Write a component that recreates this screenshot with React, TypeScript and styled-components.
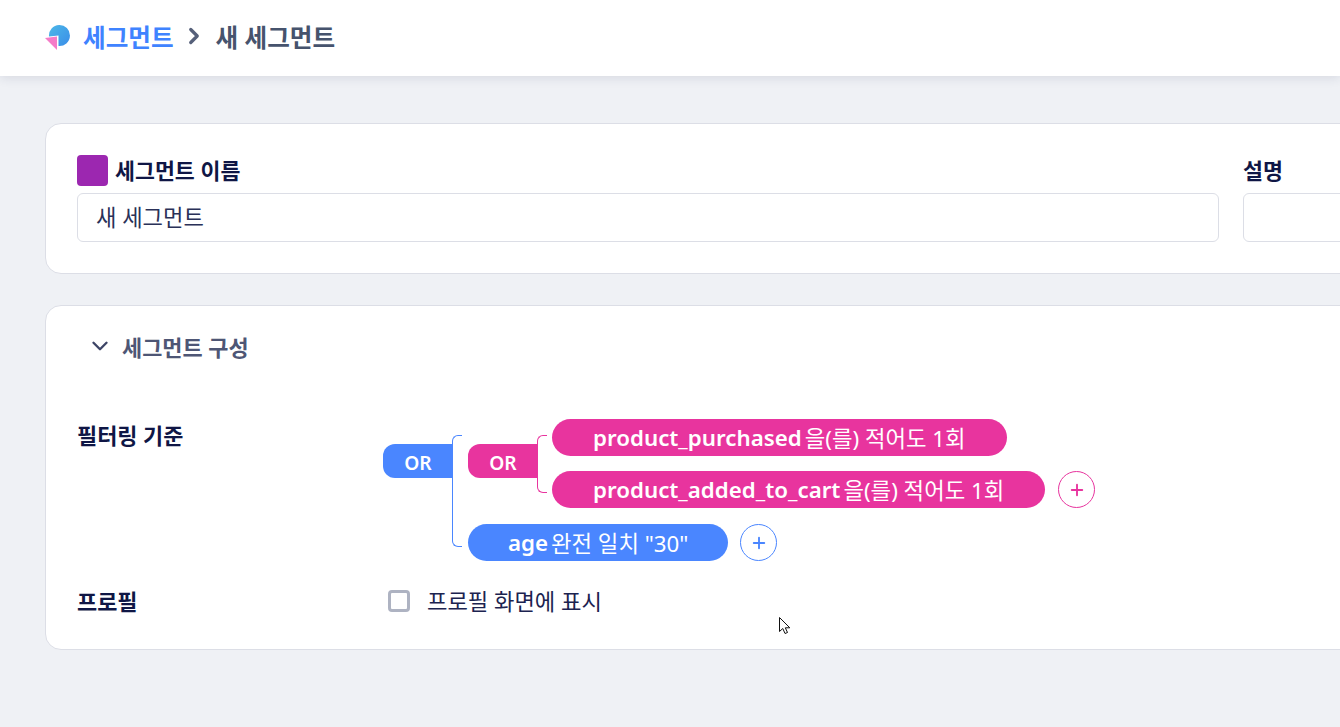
import React from "react"
import styled, { createGlobalStyle } from "styled-components"
import { ChevronDown, ChevronRight, Plus } from "lucide-react"

const BLUE = "#4a86ff"
const PINK = "#e8349e"

const GlobalStyle = createGlobalStyle`
  html, body {
    margin: 0;
    height: 100%;
    overflow: hidden;
    background: #eff1f5;
    font-family: "Noto Sans", "Noto Sans CJK KR", sans-serif;
    color: #0f1645;
  }
`

const Page = styled.div`
  position: relative;
  width: 1340px;
  height: 727px;
  overflow: hidden;
`

const Header = styled.header`
  height: 76px;
  box-sizing: border-box;
  padding: 0 0 5px 45px;
  background: #fff;
  box-shadow: 0 2px 10px rgba(40, 50, 90, 0.12);
  display: flex;
  align-items: center;
  font-size: 24.6px;
  font-weight: 700;
`

const Crumb = styled.span<{ $current?: boolean }>`
  color: ${({ $current }) => ($current ? "#46536d" : "#3f83ff")};
`

const CrumbArrow = styled.span`
  display: flex;
  margin: 0 9px 0 7px;
  color: #56607a;
`

const Content = styled.main`
  width: 1700px;
  padding: 47px 0 0 45px;
  display: flex;
  flex-direction: column;
  gap: 31px;
`

const Card = styled.section`
  background: #fff;
  border: 1px solid #dcdee6;
  border-radius: 16px;
  padding: 30px 31px;
  box-sizing: border-box;
`

const NameCard = styled(Card)`
  display: flex;
  gap: 24px;
  height: 151px;
`

const Field = styled.div<{ $width: number }>`
  width: ${({ $width }) => $width}px;
  display: flex;
  flex-direction: column;
  gap: 7px;
`

const FieldLabel = styled.label`
  display: flex;
  align-items: center;
  gap: 7px;
  height: 32px;
  font-size: 21.7px;
  font-weight: 700;
`

const FieldTitle = styled.span`
  margin-top: -2px;
`

const Swatch = styled.span`
  width: 31px;
  height: 31px;
  border-radius: 4px;
  background: #9c27b0;
`

const TextInput = styled.div`
  box-sizing: border-box;
  height: 49px;
  border: 1px solid #dcdee6;
  border-radius: 6px;
  padding: 0 18px 2px;
  display: flex;
  align-items: center;
  font-size: 22.2px;
  color: #2a3158;
`

const BuilderCard = styled(Card)`
  height: 345px;
  padding: 22px 31px 0;
`

const SectionToggle = styled.div`
  display: flex;
  align-items: center;
  gap: 9px;
  height: 38px;
  box-sizing: border-box;
  padding: 0 0 2px 10px;
  font-size: 21.9px;
  font-weight: 700;
  color: #4e5675;
`

const Row = styled.div`
  display: flex;
  align-items: flex-start;
`

const FilterRow = styled(Row)`
  margin-top: 53px;
`

const ProfileRow = styled(Row)`
  margin-top: 23px;
  align-items: center;
`

const RowLabel = styled.div`
  width: 306px;
  font-size: 21.9px;
  font-weight: 700;
`

const Group = styled.div`
  display: flex;
  align-items: flex-start;
`

const Connector = styled.div<{ $color: string }>`
  width: 70px;
  height: 34px;
  box-sizing: border-box;
  padding-top: 2px;
  margin-top: 25px;
  border-radius: 12px 0 0 12px;
  background: ${({ $color }) => $color};
  color: #fff;
  font-size: 19.2px;
  font-weight: 600;
  display: flex;
  align-items: center;
  justify-content: center;
`

const Bracket = styled.div<{ $color: string; $height: number; $gap: number }>`
  box-sizing: border-box;
  width: 10px;
  height: ${({ $height }) => $height}px;
  margin: 16px ${({ $gap }) => $gap}px 0 -1px;
  border: 1px solid ${({ $color }) => $color};
  border-right: none;
  border-radius: 6px 0 0 6px;
`

const Children = styled.div<{ $gap: number }>`
  display: flex;
  flex-direction: column;
  align-items: flex-start;
  gap: ${({ $gap }) => $gap}px;
`

const ConditionRow = styled.div<{ $gap: number }>`
  display: flex;
  align-items: center;
  gap: ${({ $gap }) => $gap}px;
`

const Condition = styled.div<{ $color: string; $padding: number }>`
  height: 37px;
  padding: 0 ${({ $padding }) => $padding}px;
  border-radius: 19px;
  background: ${({ $color }) => $color};
  color: #fff;
  font-size: 22.3px;
  display: flex;
  align-items: center;
  gap: 3px;
  white-space: nowrap;
`

const EventName = styled.b`
  font-weight: 600;
`

const AddButton = styled.button<{ $color: string }>`
  width: 37px;
  height: 37px;
  padding: 0;
  border: 1px solid ${({ $color }) => $color};
  border-radius: 50%;
  background: #fff;
  color: ${({ $color }) => $color};
  display: flex;
  align-items: center;
  justify-content: center;
`

const CheckLabel = styled.label`
  display: flex;
  align-items: center;
  gap: 17px;
  margin-left: 5px;
  font-size: 22.2px;
  color: #1c2350;
`

const CheckBox = styled.span`
  box-sizing: border-box;
  width: 22px;
  height: 22px;
  border: 3px solid #aeb3c2;
  border-radius: 4px;
  background: #fff;
`

const Cursor = styled.svg`
  position: absolute;
  left: 779px;
  top: 617px;
`

const LogoMark = styled.svg`
  margin: 5px 12px 0 0;
`

const Logo = () => (
  <LogoMark width="26" height="26" viewBox="0 0 26 26">
    <defs>
      <linearGradient id="logoGrad" x1="0" y1="0" x2="1" y2="1">
        <stop offset="0" stopColor="#4cb8e8" />
        <stop offset="1" stopColor="#3a8de8" />
      </linearGradient>
    </defs>
    <path d="M4 11.5 A10.5 10.5 0 1 1 13.5 21 L13.5 10.5 Z" fill="url(#logoGrad)" />
    <path d="M0 13 L12 11.5 L12 25 Z" fill="#f57cc8" />
  </LogoMark>
)

export default function App() {
  return (
    <Page>
      <GlobalStyle />
      <Header>
        <Logo />
        <Crumb>세그먼트</Crumb>
        <CrumbArrow>
          <ChevronRight size={26} strokeWidth={3} />
        </CrumbArrow>
        <Crumb $current>새 세그먼트</Crumb>
      </Header>
      <Content>
        <NameCard>
          <Field $width={1142}>
            <FieldLabel>
              <Swatch />
              <FieldTitle>세그먼트 이름</FieldTitle>
            </FieldLabel>
            <TextInput>새 세그먼트</TextInput>
          </Field>
          <Field $width={400}>
            <FieldLabel>
              <FieldTitle>설명</FieldTitle>
            </FieldLabel>
            <TextInput />
          </Field>
        </NameCard>
        <BuilderCard>
          <SectionToggle>
            <ChevronDown size={26} strokeWidth={2.2} color="#3d4566" />
            세그먼트 구성
          </SectionToggle>
          <FilterRow>
            <RowLabel>필터링 기준</RowLabel>
            <Group>
              <Connector $color={BLUE}>OR</Connector>
              <Bracket $color={BLUE} $height={112} $gap={6} />
              <Children $gap={16}>
                <Group>
                  <Connector $color={PINK}>OR</Connector>
                  <Bracket $color={PINK} $height={58} $gap={5} />
                  <Children $gap={15}>
                    <Condition $color={PINK} $padding={41}>
                      <EventName>product_purchased</EventName>을(를) 적어도 1회
                    </Condition>
                    <ConditionRow $gap={13}>
                      <Condition $color={PINK} $padding={41}>
                        <EventName>product_added_to_cart</EventName>을(를) 적어도 1회
                      </Condition>
                      <AddButton $color={PINK}>
                        <Plus size={18} strokeWidth={2.5} />
                      </AddButton>
                    </ConditionRow>
                  </Children>
                </Group>
                <ConditionRow $gap={12}>
                  <Condition $color={BLUE} $padding={40}>
                    <EventName>age</EventName>완전 일치 "30"
                  </Condition>
                  <AddButton $color={BLUE}>
                    <Plus size={18} strokeWidth={2.5} />
                  </AddButton>
                </ConditionRow>
              </Children>
            </Group>
          </FilterRow>
          <ProfileRow>
            <RowLabel>프로필</RowLabel>
            <CheckLabel>
              <CheckBox />
              프로필 화면에 표시
            </CheckLabel>
          </ProfileRow>
        </BuilderCard>
      </Content>
      <Cursor width="14" height="20" viewBox="0 0 14 20">
        <path d="M0.5 0.5 L0.5 14.5 L3.8 11.5 L6 16.5 L8.5 15.5 L6.3 10.8 L10.8 10.8 Z" fill="#fff" stroke="#111" strokeWidth="1" />
      </Cursor>
    </Page>
  )
}
